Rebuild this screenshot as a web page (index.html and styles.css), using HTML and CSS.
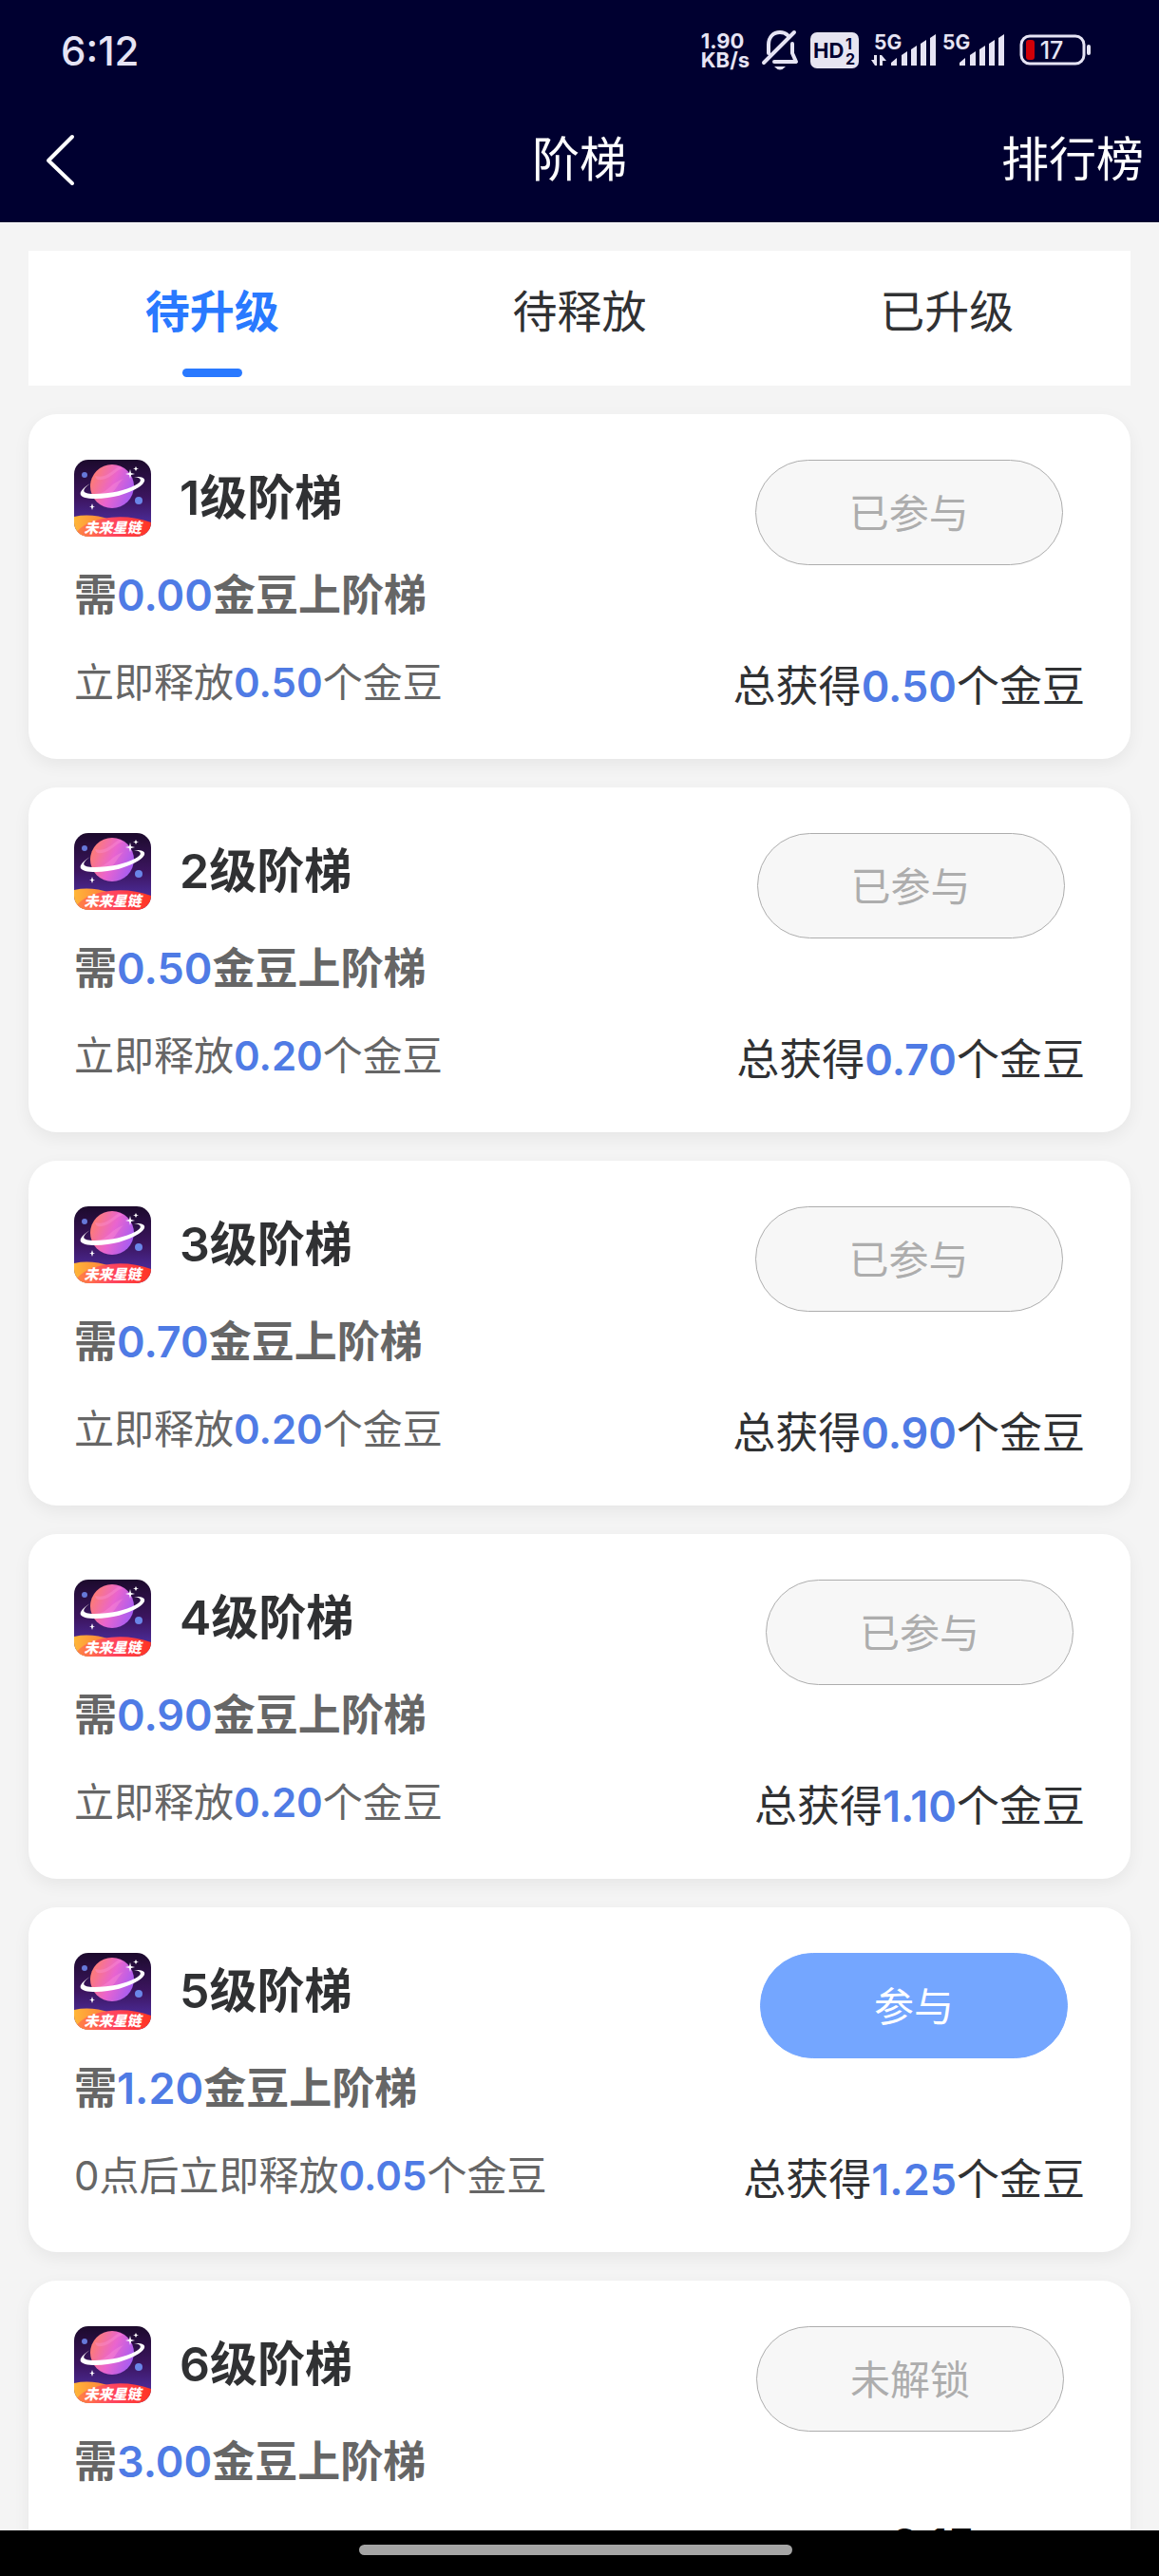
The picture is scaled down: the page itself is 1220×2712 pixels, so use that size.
FILE: index.html
```html
<!DOCTYPE html>
<html lang="zh-CN">
<head>
    <meta charset="UTF-8">
    <meta name="viewport" content="width=device-width, initial-scale=1.0">
    <title>阶梯</title>
    <link rel="stylesheet" href="styles.css">
</head>
<body>
    <svg class="defs" width="0" height="0" aria-hidden="true">
        <defs>
            <linearGradient id="sky" x1="0" y1="0" x2="0" y2="1">
                <stop offset="0" stop-color="#1c0a2c"/>
                <stop offset="0.5" stop-color="#3c1560"/>
                <stop offset="0.8" stop-color="#4a2a94"/>
            </linearGradient>
            <linearGradient id="planet" x1="0" y1="0.3" x2="1" y2="0.7">
                <stop offset="0" stop-color="#ff7d6e"/>
                <stop offset="0.5" stop-color="#e964cf"/>
                <stop offset="1" stop-color="#a05cf5"/>
            </linearGradient>
            <linearGradient id="sand" x1="0" y1="0" x2="1" y2="0">
                <stop offset="0" stop-color="#ffb638"/>
                <stop offset="1" stop-color="#ff7a3c"/>
            </linearGradient>
            <linearGradient id="hill" x1="0" y1="0" x2="1" y2="0">
                <stop offset="0" stop-color="#ff8a40"/>
                <stop offset="0.5" stop-color="#ff4560"/>
                <stop offset="1" stop-color="#ff3522"/>
            </linearGradient>
            <clipPath id="round"><rect width="81" height="81" rx="15"/></clipPath>
        </defs>
        <symbol id="logo" viewBox="0 0 81 81">
            <g clip-path="url(#round)">
                <rect width="81" height="81" fill="url(#sky)"/>
                <circle cx="40" cy="28" r="23" fill="url(#planet)"/>
                <path d="M22 17c9 3 16-3 25-10l5 2c-9 2-13 11-23 12-4 1-6 0-7-4zM24 36c11-1 15-12 28-16-7 6-8 13-15 17-5 3-9 2-13-1z" fill="#ff96d8" opacity="0.35"/>
                <path d="M63 18c14-1 14 5 5 11-11 7-29 12-45 12-19 0-22-6-6-16-10 7-9 11 4 11 17 0 34-4 43-9 8-4 8-8-1-9z" fill="#fff"/>
                <circle cx="11" cy="16" r="3" fill="#6678d8"/>
                <circle cx="68" cy="43" r="4" fill="#6a86e8"/>
                <path d="M59 10l1 4 4 1-4 1-1 4-1-4-4-1 4-1zM65 7l1 2 2 0-2 1-1 2-1-2-2 0 2-1zM19 46l1 3 2 0-2 1-1 3-1-3-2 0 2-1z" fill="#fff"/>
                <path d="M0 60q18-4 38 3v18H0z" fill="url(#sand)"/>
                <path d="M0 81q6-14 30-19 26-5 51 4v16H0z" fill="url(#hill)"/>
            </g>
        </symbol>
    </svg>

    <header class="header">
        <div class="status">
            <span class="clock">6:12</span>
            <div class="status-icons">
                <span class="speed">1.90<br>KB/s</span>
                <svg class="bell" width="40" height="44" viewBox="0 0 40 44" fill="none" stroke="#e6e4f4" stroke-width="4" stroke-linecap="round" stroke-linejoin="round">
                    <path d="M8 25V16C8 8 13 3 20 3c4 0 6 1 8 3M33 15v10l4 9H14M3 35L35 3"/>
                    <path d="M14 39h12q-6 7-12 0z" fill="#e6e4f4" stroke="none"/>
                </svg>
                <svg class="hd" width="52" height="38" viewBox="0 0 52 38">
                    <rect width="51" height="38" rx="7" fill="#e6e4f0"/>
                    <text class="hd-text" x="3" y="27">HD</text>
                    <text class="hd-num" x="37" y="18">1</text>
                    <text class="hd-num" x="37" y="34">2</text>
                </svg>
                <svg class="signal" width="70" height="38" viewBox="0 0 70 38" fill="#e6e4f4">
                    <text class="signal-text" x="3" y="18">5G</text>
                    <path d="M0 29h3v-5h3v11H4zM9 24h2l5 6h-4v5H9z"/>
                    <path d="M21 35v-3l6-5v8zM32 35V24l6-4v15zM42 35V18l6-4v21zM52 35V12l6-4v27zM62 35V6l6-4v33z"/>
                </svg>
                <svg class="signal" width="70" height="38" viewBox="0 0 70 38" fill="#e6e4f4">
                    <text class="signal-text" x="3" y="18">5G</text>
                    <path d="M21 35v-3l6-5v8zM32 35V24l6-4v15zM42 35V18l6-4v21zM52 35V12l6-4v27zM62 35V6l6-4v33z"/>
                </svg>
                <svg class="battery" width="76" height="34" viewBox="0 0 76 34">
                    <rect x="2" y="2" width="66" height="29" rx="9" fill="none" stroke="#e6e4f4" stroke-width="3"/>
                    <rect x="7" y="6" width="9" height="21" rx="3" fill="#d00008"/>
                    <rect x="71" y="11" width="4" height="11" rx="2" fill="#e6e4f4"/>
                    <text class="battery-text" x="34" y="26" text-anchor="middle">17</text>
                </svg>
            </div>
        </div>
        <nav class="nav">
            <button class="back" aria-label="返回">
                <svg width="30" height="60" viewBox="0 0 30 60" fill="none" stroke="#fff" stroke-width="4" stroke-linecap="round" stroke-linejoin="round"><path d="M28 6L3 31l25 24"/></svg>
            </button>
            <h1>阶梯</h1>
            <a class="rank" href="#">排行榜</a>
        </nav>
    </header>

    <main class="content">
        <div class="tabs">
            <button class="tab active">待升级</button>
            <button class="tab">待释放</button>
            <button class="tab">已升级</button>
        </div>

        <section class="card">
            <div class="info">
                <div class="title">
                    <div class="logo"><svg><use href="#logo"/></svg><span>未来星链</span></div>
                    <h2>1级阶梯</h2>
                </div>
                <p class="need">需<b>0.00</b>金豆上阶梯</p>
                <p class="release">立即释放<b>0.50</b>个金豆</p>
            </div>
            <div class="side">
                <button class="btn" disabled>已参与</button>
                <p class="total">总获得<b>0.50</b>个金豆</p>
            </div>
        </section>

        <section class="card">
            <div class="info">
                <div class="title">
                    <div class="logo"><svg><use href="#logo"/></svg><span>未来星链</span></div>
                    <h2>2级阶梯</h2>
                </div>
                <p class="need">需<b>0.50</b>金豆上阶梯</p>
                <p class="release">立即释放<b>0.20</b>个金豆</p>
            </div>
            <div class="side">
                <button class="btn" disabled>已参与</button>
                <p class="total">总获得<b>0.70</b>个金豆</p>
            </div>
        </section>

        <section class="card">
            <div class="info">
                <div class="title">
                    <div class="logo"><svg><use href="#logo"/></svg><span>未来星链</span></div>
                    <h2>3级阶梯</h2>
                </div>
                <p class="need">需<b>0.70</b>金豆上阶梯</p>
                <p class="release">立即释放<b>0.20</b>个金豆</p>
            </div>
            <div class="side">
                <button class="btn" disabled>已参与</button>
                <p class="total">总获得<b>0.90</b>个金豆</p>
            </div>
        </section>

        <section class="card">
            <div class="info">
                <div class="title">
                    <div class="logo"><svg><use href="#logo"/></svg><span>未来星链</span></div>
                    <h2>4级阶梯</h2>
                </div>
                <p class="need">需<b>0.90</b>金豆上阶梯</p>
                <p class="release">立即释放<b>0.20</b>个金豆</p>
            </div>
            <div class="side">
                <button class="btn" disabled>已参与</button>
                <p class="total">总获得<b>1.10</b>个金豆</p>
            </div>
        </section>

        <section class="card">
            <div class="info">
                <div class="title">
                    <div class="logo"><svg><use href="#logo"/></svg><span>未来星链</span></div>
                    <h2>5级阶梯</h2>
                </div>
                <p class="need">需<b>1.20</b>金豆上阶梯</p>
                <p class="release">0点后立即释放<b>0.05</b>个金豆</p>
            </div>
            <div class="side">
                <button class="btn primary">参与</button>
                <p class="total">总获得<b>1.25</b>个金豆</p>
            </div>
        </section>

        <section class="card locked">
            <div class="info">
                <div class="title">
                    <div class="logo"><svg><use href="#logo"/></svg><span>未来星链</span></div>
                    <h2>6级阶梯</h2>
                </div>
                <p class="need">需<b>3.00</b>金豆上阶梯</p>
            </div>
            <div class="side">
                <button class="btn" disabled>未解锁</button>
                <p class="total"><b>2.15</b></p>
            </div>
        </section>
    </main>

    <footer class="gesture"><span class="bar"></span></footer>
</body>
</html>
```
FILE: styles.css
```css
* {
    box-sizing: border-box;
}
body {
    margin: 0;
    height: 100vh;
    display: flex;
    flex-direction: column;
    overflow: hidden;
    background-color: #f4f4f4;
    color: #303133;
    font-family: Inter, "Noto Sans CJK SC", sans-serif;
}
h1, h2, p {
    margin: 0;
}
button {
    font-family: inherit;
    border: none;
    background: none;
    padding: 0;
    cursor: pointer;
}
svg {
    overflow: visible;
}
.defs {
    position: absolute;
}

/* header */
.header {
    flex: none;
    background-color: #000030;
    color: white;
}
.status {
    display: flex;
    justify-content: space-between;
    align-items: center;
    height: 106px;
    padding: 0 71px 0 64px;
    color: #e6e4f4;
}
.clock {
    font-size: 42px;
    font-weight: 500;
}
.status-icons {
    display: flex;
    align-items: center;
}
.speed {
    font-size: 22px;
    line-height: 20px;
    font-weight: 700;
}
.bell {
    margin-left: 12px;
}
.hd {
    margin-left: 12px;
}
.hd-text {
    font: 700 22px Inter, sans-serif;
    fill: #000030;
}
.hd-num {
    font: 700 16px Inter, sans-serif;
    fill: #000030;
}
.signal {
    margin-left: 12px;
}
.signal + .signal {
    margin-left: 2px;
}
.signal-text {
    font: 700 21px Inter, sans-serif;
}
.battery {
    margin-left: 14px;
}
.battery-text {
    font: 500 25px Inter, sans-serif;
    fill: #e6e4f4;
}
.nav {
    display: grid;
    grid-template-columns: 1fr auto 1fr;
    align-items: center;
    height: 128px;
    padding: 0 16px 4px;
}
.back {
    justify-self: start;
    display: flex;
    margin-left: 32px;
}
.nav h1, .rank {
    font-size: 50px;
    font-weight: 400;
    line-height: 60px;
}
.rank {
    justify-self: end;
    color: white;
    text-decoration: none;
}

/* tabs */
.content {
    flex: 1;
    min-height: 0;
    overflow: hidden;
    padding: 30px 30px 0;
}
.tabs {
    display: flex;
    height: 142px;
    margin-bottom: 30px;
    background-color: white;
}
.tab {
    flex: 1;
    display: flex;
    flex-direction: column;
    align-items: center;
    justify-content: space-between;
    padding: 32px 0 9px;
    font-size: 47px;
    line-height: 64px;
    color: #303133;
}
.tab.active {
    color: #2979ff;
    font-weight: 700;
}
.tab.active::after {
    content: "";
    width: 63px;
    height: 9px;
    border-radius: 5px;
    background-color: #2979ff;
}

/* cards */
.card {
    display: flex;
    justify-content: space-between;
    height: 363px;
    margin-bottom: 30px;
    padding: 48px;
    border-radius: 30px;
    background-color: white;
    box-shadow: 0 6px 18px rgba(0, 0, 0, 0.06);
}
.card b {
    font-weight: 600;
    color: #4f7be5;
}
.title {
    display: flex;
    align-items: center;
    gap: 30px;
}
.logo {
    position: relative;
    width: 81px;
    height: 81px;
}
.logo svg {
    display: block;
    width: 100%;
    height: 100%;
}
.logo span {
    position: absolute;
    left: 0;
    right: 0;
    bottom: 0;
    color: white;
    font-size: 15px;
    line-height: 18px;
    font-weight: 900;
    font-style: italic;
    text-align: center;
}
.title h2 {
    font-size: 50px;
    line-height: 81px;
    font-weight: 600;
}
.need {
    margin-top: 30px;
    font-size: 45px;
    line-height: 64px;
    font-weight: 600;
    color: #666;
}
.release {
    margin-top: 28px;
    font-size: 42px;
    line-height: 64px;
    color: #666;
}
.side {
    display: flex;
    flex-direction: column;
    align-items: center;
}
.btn {
    flex: none;
    width: 324px;
    height: 111px;
    padding-bottom: 4px;
    border: 1px solid #adadad;
    border-radius: 56px;
    background-color: #f7f7f7;
    font-size: 42px;
    color: #adadad;
}
.btn.primary {
    border-color: #74a6ff;
    background-color: #74a6ff;
    color: white;
}
.total {
    margin-top: 96px;
    font-size: 45px;
    line-height: 64px;
}
.locked .side {
    width: 368px;
}
.locked .total {
    margin-top: 87px;
    padding-left: 48px;
}
.locked .total b {
    color: black;
    font-weight: 700;
}

/* gesture bar */
.gesture {
    flex: none;
    display: flex;
    justify-content: center;
    align-items: center;
    height: 48px;
    padding: 0 8px 7px 0;
    background-color: black;
}
.bar {
    width: 456px;
    height: 11px;
    border-radius: 6px;
    background-color: #a5a5a5;
}
```
